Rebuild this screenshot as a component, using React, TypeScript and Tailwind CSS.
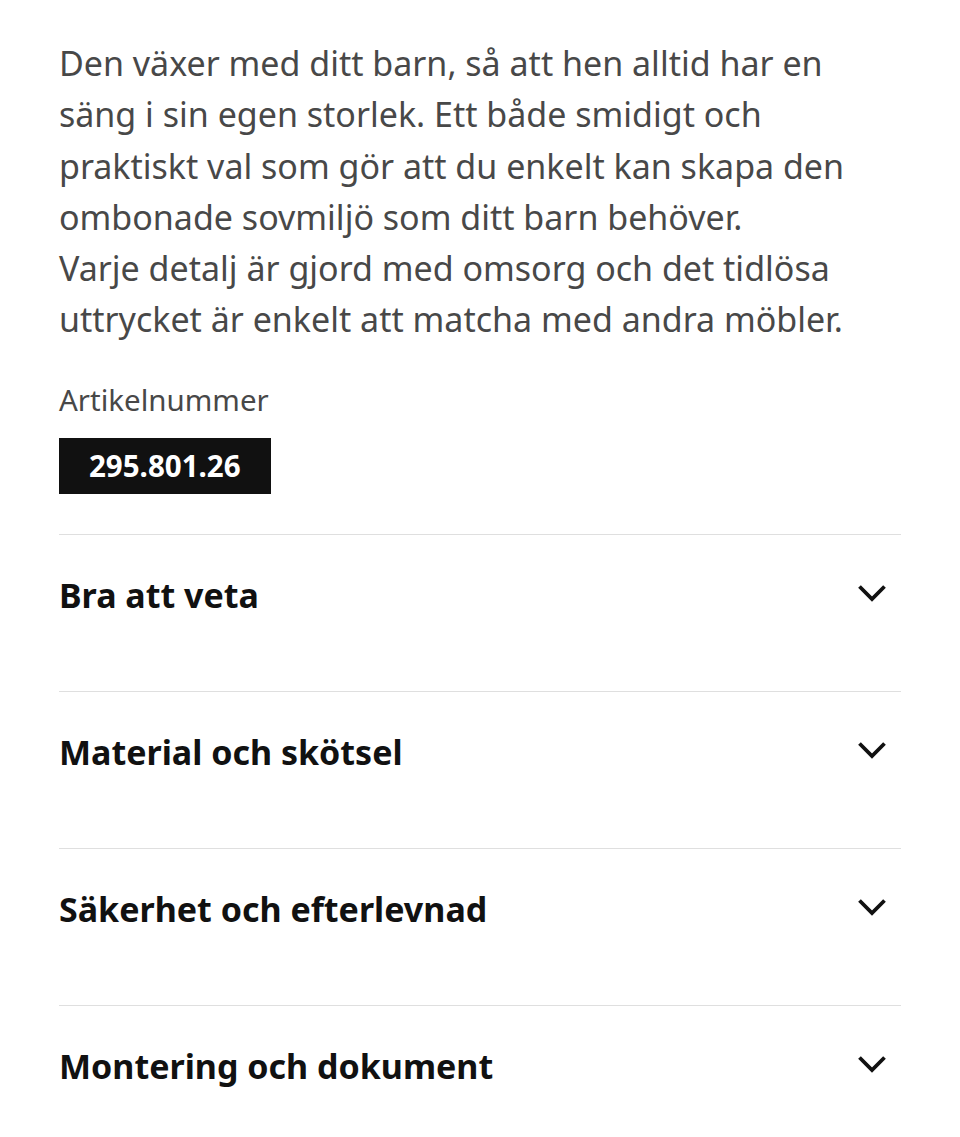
import React from "react";

const sections = [
  "Bra att veta",
  "Material och skötsel",
  "Säkerhet och efterlevnad",
  "Montering och dokument",
];

function Chevron() {
  return (
    <svg width="30" height="18" viewBox="0 0 30 18" fill="none" className="mt-[13px] mr-[14px] shrink-0">
      <polyline points="2.5,2.5 15,15 27.5,2.5" stroke="#111111" strokeWidth="3.8" strokeLinecap="butt" strokeLinejoin="miter" />
    </svg>
  );
}

export default function App() {
  return (
    <div className="min-h-screen bg-white px-[59px] pt-[38px] font-['Noto_Sans',sans-serif]">
      {/* Description */}
      <p className="text-[34px] leading-[51.3px] text-[#484848]">
        Den växer med ditt barn, så att hen alltid har en säng i sin egen storlek. Ett både smidigt och praktiskt val som
        gör att du enkelt kan skapa den ombonade sovmiljö som ditt barn behöver.
        <br />
        Varje detalj är gjord med omsorg och det tidlösa uttrycket är enkelt att matcha med andra möbler.
      </p>

      {/* Article number */}
      <div className="mt-[36px] text-[29.5px] leading-[36px] text-[#484848]">Artikelnummer</div>
      <div className="mt-[20px] inline-flex h-[56px] items-center bg-[#111111] px-[30px] text-[29.5px] font-bold text-white">
        295.801.26
      </div>

      {/* Accordion */}
      <div className="mt-[40px]">
        {sections.map((title) => (
          <div key={title} className="flex h-[157px] items-start justify-between border-t border-[#dfdfdf] pt-[36px]">
            <span className="text-[34px] font-bold leading-[48px] text-[#111111]">{title}</span>
            <Chevron />
          </div>
        ))}
      </div>
    </div>
  );
}
